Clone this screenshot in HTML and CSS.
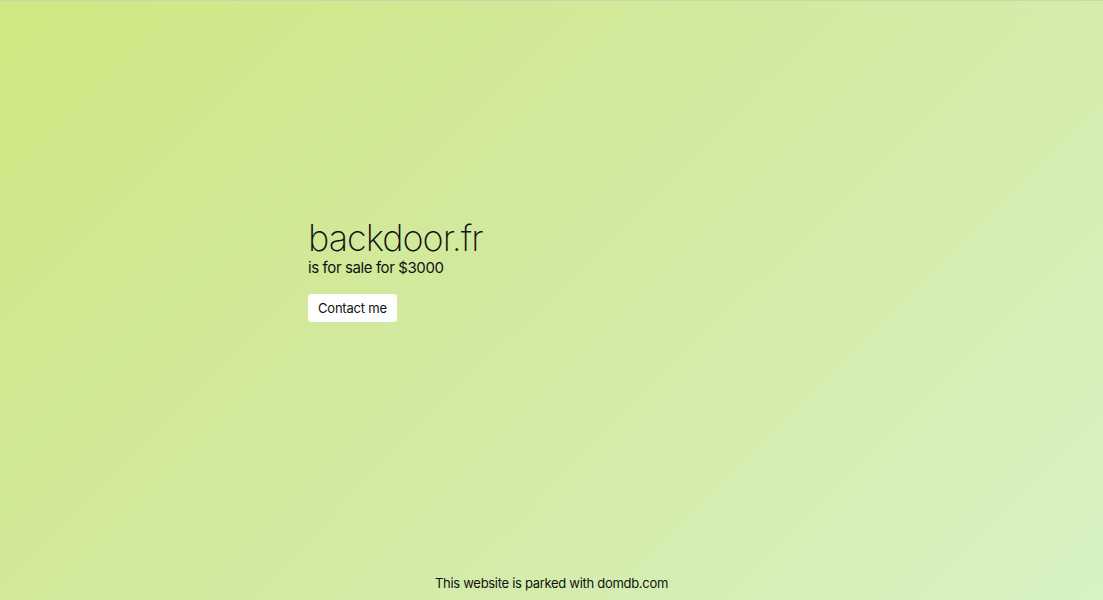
FILE: index.html
```html
<!DOCTYPE html>
<html lang="en">
<head>
<meta charset="utf-8">
<title>backdoor.fr</title>
<link rel="stylesheet" href="styles.css">
</head>
<body>
<div class="page">
  <main class="main">
    <div class="content">
      <h1 class="domain">backdoor.fr</h1>
      <p class="price">is for sale for $3000</p>
      <a class="contact" href="#">Contact me</a>
    </div>
  </main>
  <footer class="footer">This website is parked with domdb.com</footer>
</div>
</body>
</html>
```
FILE: styles.css
```css
html, body {
  margin: 0;
  padding: 0;
  height: 100%;
}
body {
  font-family: Inter, "Noto Sans", sans-serif;
  color: #111;
  background: linear-gradient(135deg, #cfe882 0%, #d2eaa2 50%, #d8f3c4 100%);
  border-top: 1px solid #c9d8a6;
  box-sizing: border-box;
}
.page {
  height: 100%;
  display: flex;
  flex-direction: column;
}
.main {
  flex: 1;
  display: flex;
  justify-content: center;
  padding-top: 218px;
}
.content {
  width: 487px;
}
.domain {
  margin: 0;
  font-size: 36px;
  font-weight: 200;
  line-height: 38px;
  letter-spacing: -1px;
}
.price {
  margin: 2px 0 0;
  font-size: 15px;
  line-height: 18px;
  letter-spacing: -0.4px;
}
.contact {
  display: inline-block;
  margin-top: 17px;
  background: #fff;
  color: #111;
  text-decoration: none;
  font-size: 13px;
  line-height: 28px;
  padding: 0 10px;
  letter-spacing: -0.2px;
  border-radius: 3px;
}
.footer {
  text-align: center;
  font-size: 13px;
  line-height: 16px;
  letter-spacing: -0.3px;
  padding-bottom: 9px;
}
```
